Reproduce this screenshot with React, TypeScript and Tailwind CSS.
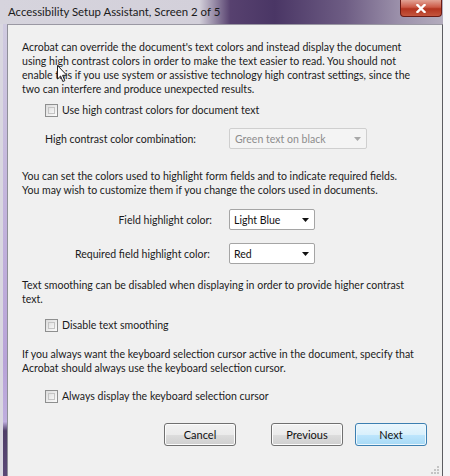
import React from "react";

function Checkbox() {
  return (
    <span className="inline-block w-[13px] h-[13px] border border-[#8e8f8f] bg-gradient-to-br from-[#dcdcdc] to-[#fbfbfb] p-[2px] shrink-0">
      <span className="block w-full h-full border border-[#c4c4c4] bg-gradient-to-br from-[#e2e2e2] to-[#f6f6f6]" />
    </span>
  );
}

function Arrow({ gray }: { gray?: boolean }) {
  return (
    <svg width="7" height="4" viewBox="0 0 7 4">
      <path d="M0 0 L7 0 L3.5 4 Z" fill={gray ? "#a8a8a8" : "#111"} />
    </svg>
  );
}

function Dropdown({ text, width, disabled }: { text: string; width: string; disabled?: boolean }) {
  return (
    <div
      className={
        disabled
          ? "flex items-center h-[21px] w-[138px] border border-[#cfcfcf] rounded-[2px] bg-[#f4f4f4] text-[#8d8d8d] pl-[5px] pr-[5px]"
          : width +
            " flex items-center h-[21px] border border-[#a5a5a5] rounded-[2px] bg-white text-[#111] pl-[4px] pr-[5px]"
      }
    >
      <span className="flex-1 whitespace-nowrap">{text}</span>
      <Arrow gray={disabled} />
    </div>
  );
}

function Button({ label, primary }: { label: string; primary?: boolean }) {
  return (
    <div
      className={
        primary
          ? "w-[72px] h-[23px] rounded-[3px] border border-[#3c7fb1] flex items-center justify-center text-[#111] text-[11px] bg-[linear-gradient(#eaf6fd_0%,#d9f0fc_50%,#bee6fd_51%,#a7d9f5_100%)] shadow-[inset_0_0_0_1px_#ecf7fd]"
          : "w-[72px] h-[23px] rounded-[3px] border border-[#707070] flex items-center justify-center text-[#111] text-[11px] bg-[linear-gradient(#f2f2f2_0%,#ebebeb_50%,#dddddd_51%,#cfcfcf_100%)] shadow-[inset_0_0_0_1px_#fcfcfc]"
      }
    >
      {label}
    </div>
  );
}

export default function App() {
  return (
    <div
      className="w-[450px] h-[476px] flex bg-[#f6f6f7] overflow-hidden relative text-[10.55px] leading-[14px] text-[#1b1b1b]"
      style={{ fontFamily: "Lato, 'Noto Sans', sans-serif" }}
    >
      <div className="w-[443px] flex flex-col">
        {/* Title bar */}
        <div className="h-[24px] relative flex items-center pl-[8px] bg-[linear-gradient(90deg,#d6d4dd_0%,#d3d0da_45%,#57416f_52%,#4a3665_62%,#6e5d84_78%,#9b90aa_90%,#b3acbd_100%)]">
          <span className="text-[11.4px] text-[#1a1a1a] whitespace-nowrap">
            Accessibility Setup Assistant, Screen 2 of 5
          </span>
          <div className="absolute right-[1px] top-0 w-[42px] h-[17px] rounded-b-[4px] border border-t-0 border-[#6b1a14] bg-[linear-gradient(#e2a395_0%,#cc5a47_45%,#b3341f_55%,#c4553e_100%)] flex items-center justify-center">
            <svg width="10" height="9" viewBox="0 0 10 9">
              <path d="M1.5 1 L8.5 8 M8.5 1 L1.5 8" stroke="#fff" strokeWidth="2.4" strokeLinecap="square" />
            </svg>
          </div>
        </div>
        <div className="flex flex-1">
          {/* Left frame */}
          <div className="w-[7px] flex">
            <div className="w-[3px] bg-[#d9d7e0]" />
            <div className="w-[4px] bg-[linear-gradient(#d0cbe0_0%,#c3b4dc_40%,#b8a3d8_75%,#bfaede_88%,#4f3e68_90%,#5a4876_100%)]" />
          </div>
          {/* Content */}
          <div className="flex-1 bg-[#f0f0f0] border-l border-t border-r border-l-[#8f8f99] border-t-[#9a98a3] border-r-[#5d5d62] pl-[14px] pr-[14px] pt-[15px] relative">
            <p className="whitespace-nowrap">
              Acrobat can override the document's text colors and instead display the document
              <br />
              using high contrast colors in order to make the text easier to read. You should not
              <br />
              enable this if you use system or assistive technology high contrast settings, since the
              <br />
              two can interfere and produce unexpected results.
            </p>
            <div className="mt-[7px] ml-[23px] flex items-center gap-[4px] h-[14px]">
              <Checkbox />
              <span>Use high contrast colors for document text</span>
            </div>
            <div className="mt-[11px] flex items-center h-[21px]">
              <span className="w-[207px] pl-[23px]">High contrast color combination:</span>
              <Dropdown text="Green text on black" width="w-[138px]" disabled />
            </div>
            <p className="mt-[20px] whitespace-nowrap">
              You can set the colors used to highlight form fields and to indicate required fields.
              <br />
              You may wish to customize them if you change the colors used in documents.
            </p>
            <div className="mt-[12px] flex items-center h-[21px]">
              <span className="w-[207px] pr-[17px] text-right">Field highlight color:</span>
              <Dropdown text="Light Blue" width="w-[86px]" />
            </div>
            <div className="mt-[13px] flex items-center h-[21px]">
              <span className="w-[207px] pr-[19px] text-right">Required field highlight color:</span>
              <Dropdown text="Red" width="w-[86px]" />
            </div>
            <p className="mt-[14px] whitespace-nowrap">
              Text smoothing can be disabled when displaying in order to provide higher contrast
              <br />
              text.
            </p>
            <div className="mt-[12px] ml-[23px] flex items-center gap-[4px] h-[14px]">
              <Checkbox />
              <span>Disable text smoothing</span>
            </div>
            <p className="mt-[15px] whitespace-nowrap">
              If you always want the keyboard selection cursor active in the document, specify that
              <br />
              Acrobat should always use the keyboard selection cursor.
            </p>
            <div className="mt-[14px] ml-[23px] flex items-center gap-[4px] h-[14px]">
              <Checkbox />
              <span>Always display the keyboard selection cursor</span>
            </div>
            <div className="mt-[20px] flex justify-end pr-[1px]">
              <div className="mr-[35px]">
                <Button label="Cancel" />
              </div>
              <div className="mr-[12px]">
                <Button label="Previous" />
              </div>
              <Button label="Next" primary />
            </div>
            {/* size grip */}
            <svg className="absolute right-[2px] bottom-[1px]" width="10" height="10" viewBox="0 0 10 10">
              <g fill="#c4c4c4">
                <rect x="7" y="1" width="2" height="2" />
                <rect x="4" y="4" width="2" height="2" />
                <rect x="7" y="4" width="2" height="2" />
                <rect x="1" y="7" width="2" height="2" />
                <rect x="4" y="7" width="2" height="2" />
                <rect x="7" y="7" width="2" height="2" />
              </g>
            </svg>
            {/* mouse cursor */}
            <svg className="absolute left-[49px] top-[40px]" width="11" height="18" viewBox="0 0 11 18">
              <path
                d="M0.5 0.5 L0.5 14 L3.6 11 L5.8 16.5 L7.8 15.7 L5.6 10.3 L9.8 10.3 Z"
                fill="#fff"
                stroke="#222"
                strokeWidth="1"
                strokeLinejoin="round"
              />
            </svg>
          </div>
        </div>
      </div>
      <div className="flex-1 bg-[#f5f5f7]" />
    </div>
  );
}
